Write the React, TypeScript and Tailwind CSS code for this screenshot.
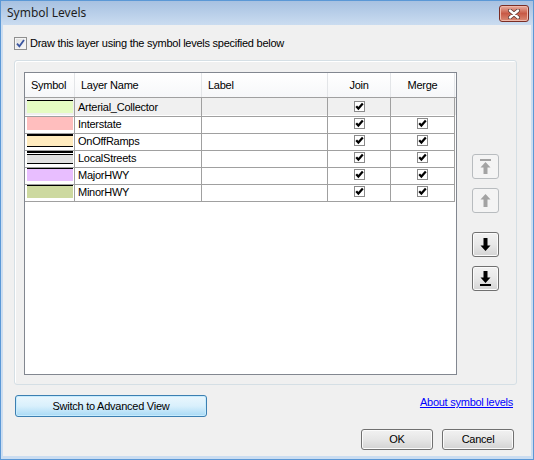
import React from 'react';

interface LayerRow {
  name: string;
  swatch: string;
  merge: boolean;
  selected?: boolean;
}

const layers: LayerRow[] = [
  { name: 'Arterial_Collector', swatch: 'bg-[#e5fcc2] border-t border-black', merge: false, selected: true },
  { name: 'Interstate', swatch: 'bg-[#ffbebe]', merge: true },
  { name: 'OnOffRamps', swatch: 'bg-[#ffebbe] border-t-2 border-b border-black', merge: true },
  {
    name: 'LocalStreets',
    swatch: 'bg-[#e1e1e1] border-t-2 border-b border-black shadow-[inset_0_1px_0_#ffffff,inset_0_2px_0_#000000]',
    merge: true,
  },
  { name: 'MajorHWY', swatch: 'bg-[#e8beff] border-t border-black', merge: true },
  { name: 'MinorHWY', swatch: 'bg-[#cdd9a0] border-t border-black', merge: true },
];

const cols = 'grid grid-cols-[50px_127px_126px_63px_64px]';

function ListCheck() {
  return (
    <span className="flex h-[11px] w-[11px] items-center justify-center border border-[#8a8a8a] bg-white">
      <svg width="9" height="9" viewBox="0 0 9 9">
        <path d="M1.2 4.2 L3.4 6.6 L7.8 1.6" stroke="#000" strokeWidth="2.2" fill="none" />
      </svg>
    </span>
  );
}

function WinButton({ children, className = '' }: { children: React.ReactNode; className?: string }) {
  return (
    <button
      className={`flex h-[21px] items-center justify-center rounded-[3px] border border-[#707070] bg-linear-to-b from-[#f2f2f2] via-[#e6e6e6] to-[#d3d3d3] text-[11px] text-black shadow-[inset_0_0_0_1px_#fbfbfb] ${className}`}
    >
      {children}
    </button>
  );
}

function MoveButton({ enabled, children }: { enabled: boolean; children: React.ReactNode }) {
  return (
    <div
      className={
        enabled
          ? 'flex h-[25px] w-[27px] items-center justify-center rounded-[3px] border border-[#707070] bg-linear-to-b from-[#f2f2f2] via-[#e8e8e8] to-[#d4d4d4] text-black shadow-[inset_0_0_0_1px_#fbfbfb]'
          : 'flex h-[25px] w-[27px] items-center justify-center rounded-[3px] border border-[#b8bcbf] bg-[#f4f4f4] text-[#a3a3a3]'
      }
    >
      {children}
    </div>
  );
}

export default function App() {
  return (
    <div
      className="flex h-[460px] w-[534px] flex-col border border-[#5b98d6] bg-[#cbddf1] text-black tracking-[-0.25px]"
      style={{ fontFamily: '"Liberation Sans", Arial, sans-serif' }}
    >
      {/* title bar */}
      <div className="flex h-[24px] shrink-0 items-center justify-between bg-linear-to-b from-[#a7c1e1] to-[#cadcf0] pl-[6px] pr-[4px]">
        <span
          className="text-[12px] tracking-normal text-[#1e1e1e]"
          style={{ fontFamily: '"Noto Sans", "Open Sans", sans-serif' }}
        >
          Symbol Levels
        </span>
        <div className="mt-[1px] flex h-[17px] w-[30px] items-center justify-center rounded-[3px] border border-[#7a2d24] bg-linear-to-b from-[#e6ada0] via-[#c85a46] to-[#d98a75] shadow-[inset_0_0_0_1px_#efb8aa]">
          <svg width="12" height="10" viewBox="0 0 12 10">
            <path d="M2 1.5 L10 8.5 M10 1.5 L2 8.5" stroke="#5a3a36" strokeWidth="4" strokeLinecap="round" />
            <path d="M2 1.5 L10 8.5 M10 1.5 L2 8.5" stroke="#ffffff" strokeWidth="2.4" strokeLinecap="round" />
          </svg>
        </div>
      </div>

      {/* body */}
      <div className="mx-[2px] mb-[3px] flex flex-1 flex-col bg-[#f0f0f0]">
        <label className="ml-[11px] mt-[12px] flex h-[13px] items-center gap-[3px] text-[11px] leading-[13px]">
          <span className="flex h-[13px] w-[13px] items-center justify-center border border-[#8f8f8f] bg-linear-to-br from-[#dcdcdc] to-[#fbfbfb] shadow-[inset_0_0_0_1px_#f4f4f4]">
            <svg width="9" height="9" viewBox="0 0 9 9">
              <path d="M1 4.6 L3.4 7.3 L8 1" stroke="#3a55a0" strokeWidth="1.8" fill="none" />
            </svg>
          </span>
          Draw this layer using the symbol levels specified below
        </label>

        {/* group box */}
        <div className="ml-[11px] mt-[10px] flex h-[325px] w-[503px] rounded-[3px] border border-[#d5dfe5] pl-[9px] pt-[11px] shadow-[inset_1px_1px_0_#ffffff]">
          <div className="h-[303px] w-[433px] border border-[#828790] bg-white text-[11px]">
            <div className={`${cols} h-[25px] border-b border-[#a0a0a0] bg-linear-to-b from-white to-[#f6f7f9]`}>
              <div className="flex items-center border-r border-[#e3e5e8] pt-[1px] pl-[6px]">Symbol</div>
              <div className="flex items-center border-r border-[#e3e5e8] pt-[1px] pl-[6px]">Layer Name</div>
              <div className="flex items-center border-r border-[#e3e5e8] pt-[1px] pl-[6px]">Label</div>
              <div className="flex items-center justify-center border-r border-[#e3e5e8] pt-[1px]">Join</div>
              <div className="flex items-center justify-center border-r border-[#e3e5e8] pt-[1px]">Merge</div>
            </div>
            {layers.map((l) => (
              <div key={l.name} className={`${cols} h-[17px] ${l.selected ? 'bg-[#f0f0f0]' : ''}`}>
                <div className="flex items-center border-b border-r border-[#a0a0a0] pl-[2px]">
                  <div className={`h-[13px] w-[46px] ${l.swatch}`} />
                </div>
                <div className="flex items-center border-b border-r border-[#a0a0a0] pl-[3px] pt-[1px]">{l.name}</div>
                <div className="border-b border-r border-[#a0a0a0]" />
                <div className="flex items-center justify-center border-b border-r border-[#a0a0a0]">
                  <ListCheck />
                </div>
                <div className="flex items-center justify-center border-b border-r border-[#a0a0a0]">
                  {l.merge && <ListCheck />}
                </div>
              </div>
            ))}
          </div>

          <div className="ml-[15px] mt-[82px] flex flex-col">
            <MoveButton enabled={false}>
              <svg width="11" height="15" viewBox="0 0 11 15" fill="currentColor">
                <rect x="0" y="0" width="11" height="2" />
                <path d="M5.5 3 L0.5 8.5 H3.5 V15 H7.5 V8.5 H10.5 Z" />
              </svg>
            </MoveButton>
            <div className="mt-[9px]">
              <MoveButton enabled={false}>
                <svg width="11" height="13" viewBox="0 0 11 13" fill="currentColor">
                  <path d="M5.5 0 L0.5 5.5 H3.5 V13 H7.5 V5.5 H10.5 Z" />
                </svg>
              </MoveButton>
            </div>
            <div className="mt-[19px]">
              <MoveButton enabled>
                <svg width="11" height="13" viewBox="0 0 11 13" fill="currentColor">
                  <path d="M3.5 0 H7.5 V7.5 H10.5 L5.5 13 L0.5 7.5 H3.5 Z" />
                </svg>
              </MoveButton>
            </div>
            <div className="mt-[9px]">
              <MoveButton enabled>
                <svg width="11" height="15" viewBox="0 0 11 15" fill="currentColor">
                  <path d="M3.5 0 H7.5 V6.5 H10.5 L5.5 12 L0.5 6.5 H3.5 Z" />
                  <rect x="0" y="13" width="11" height="2" />
                </svg>
              </MoveButton>
            </div>
          </div>
        </div>

        {/* bottom */}
        <div className="ml-[12px] mr-[18px] mt-[10px] flex items-start justify-between">
          <button className="flex h-[22px] w-[192px] items-center justify-center rounded-[3px] border border-[#3c7fb1] bg-linear-to-b from-[#eaf6fd] via-[#d9f0fc] to-[#a7d9f5] text-[11px] shadow-[inset_0_0_0_1px_#c7ecfe]">
            Switch to Advanced View
          </button>
          <a className="mt-[1px] text-[11px] leading-[13px] text-[#0000ff] underline">About symbol levels</a>
        </div>

        <div className="mr-[17px] mt-[12px] flex justify-end gap-[9px]">
          <WinButton className="w-[72px]">OK</WinButton>
          <WinButton className="w-[72px]">Cancel</WinButton>
        </div>
      </div>
    </div>
  );
}
